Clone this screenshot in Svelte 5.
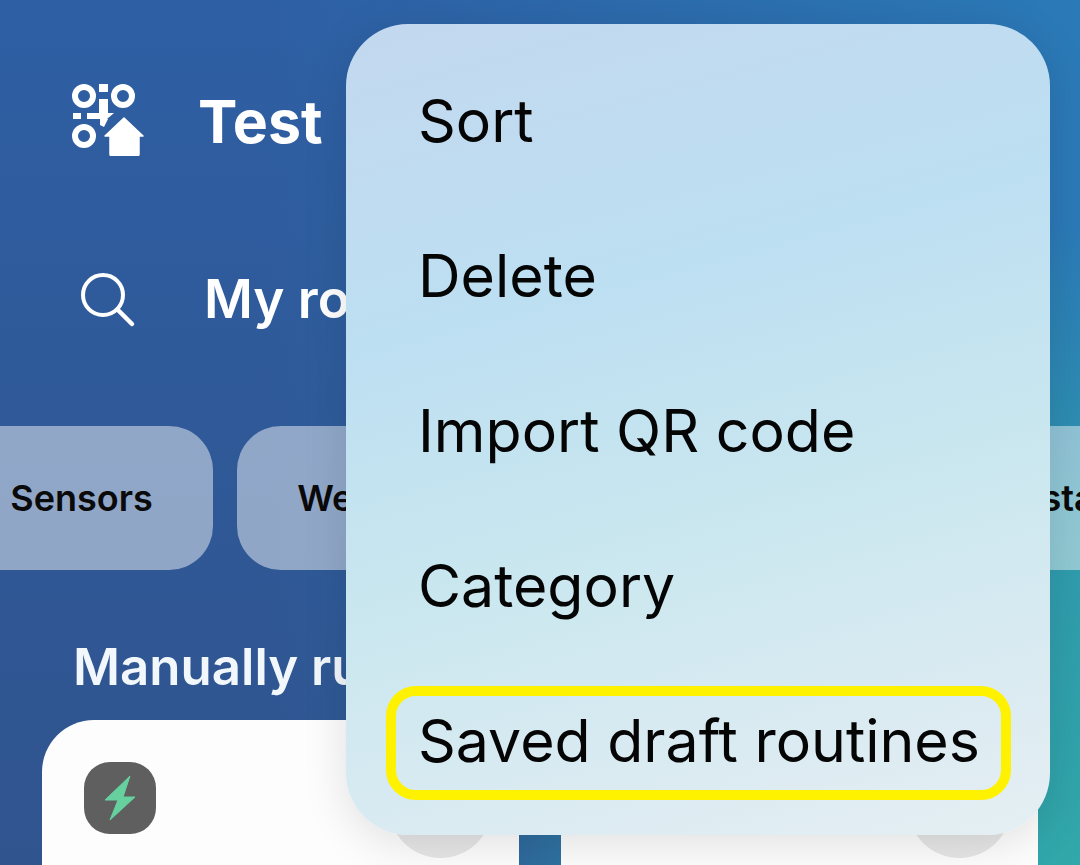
<script lang="ts">
  const chips = ["Sensors", "Weather", "Instant"];
  const menuItems = ["Sort", "Delete", "Import QR code", "Category", "Saved draft routines"];
  const cards = [0, 1];
</script>

<div class="page">
  <header class="topbar">
    <svg class="logo" viewBox="0 0 72 72" width="72" height="72" aria-hidden="true">
      <g fill="none" stroke="#fff" stroke-width="6">
        <circle cx="12" cy="12" r="9" />
        <circle cx="51" cy="12" r="9" />
        <circle cx="12" cy="52" r="9" />
      </g>
      <g fill="#fff">
        <rect x="27" y="0" width="9" height="8" />
        <rect x="27" y="15" width="9" height="14" />
        <rect x="1" y="29" width="8" height="6" />
        <rect x="15" y="29" width="13" height="6" />
        <path d="M28 29h7v6h-7zM35 29h7l-7 6zM28 35h8l-4 8-4-2z" />
        <path d="M52 34 71 52h-4v18a2 2 0 0 1-2 2H40a2 2 0 0 1-2-2V52h-5z" stroke="#fff" stroke-width="1.5" stroke-linejoin="round" />
      </g>
    </svg>
    <h1>Test</h1>
  </header>

  <div class="searchbar">
    <svg class="search" viewBox="0 0 60 60" width="60" height="60" aria-hidden="true">
      <circle cx="25" cy="26" r="20" fill="none" stroke="#fff" stroke-width="4" />
      <path d="M40 41 54 55" fill="none" stroke="#fff" stroke-width="4.5" stroke-linecap="round" />
    </svg>
    <h2>My routines</h2>
  </div>

  <div class="chips">
    {#each chips as chip}
      <div class="chip">{chip}</div>
    {/each}
  </div>

  <h3>Manually run</h3>

  <div class="cards">
    {#each cards as card}
      <div class="card">
        <div class="tile">
          {#if card === 0}
            <svg viewBox="0 0 72 72" width="72" height="72" aria-hidden="true">
              <path d="M46 14 21 38h13L26 58 51 35H39z" fill="#66d19e" stroke="#66d19e" stroke-width="1" stroke-linejoin="round" />
            </svg>
          {/if}
        </div>
        <div class="play"></div>
      </div>
    {/each}
  </div>

  <nav class="menu">
    {#each menuItems as item, i}
      <div class="item" class:marked={i === menuItems.length - 1}>{item}</div>
    {/each}
  </nav>
</div>

<style>
  :global(body) {
    margin: 0;
    background: #2f5a9a;
  }

  .page {
    position: relative;
    width: 1080px;
    height: 865px;
    overflow: hidden;
    display: flex;
    flex-direction: column;
    color: #fff;
    font-family: Inter, "Noto Sans", sans-serif;
    background:
      radial-gradient(ellipse 620px 640px at 100% 100%, #31a8aa 0%, rgba(49, 168, 170, 0.75) 45%, rgba(49, 168, 170, 0) 100%),
      linear-gradient(90deg, rgba(43, 122, 184, 0) 25%, #2b7ab8 100%),
      linear-gradient(180deg, #2e5fa4 0%, #2f5a9a 40%, #30548e 100%);
  }

  .topbar {
    flex: none;
    display: flex;
    align-items: center;
    height: 80px;
    margin-top: 80px;
    padding-left: 72px;
    gap: 54px;
  }

  .topbar h1 {
    margin: 0;
    padding-top: 3px;
    font-size: 59px;
    font-weight: 700;
    line-height: 77px;
  }

  .searchbar {
    flex: none;
    display: flex;
    align-items: center;
    height: 80px;
    margin-top: 99px;
    padding-left: 78px;
    gap: 66px;
  }

  .searchbar h2 {
    margin: 0;
    font-size: 53px;
    font-weight: 600;
    white-space: nowrap;
  }

  .chips {
    flex: none;
    display: flex;
    gap: 24px;
    height: 144px;
    margin-top: 87px;
    margin-left: -50px;
  }

  .chip {
    flex: none;
    display: flex;
    align-items: center;
    justify-content: center;
    width: 263px;
    border-radius: 44px;
    background: rgba(255, 255, 255, 0.47);
    color: #0a0a0a;
    font-size: 36px;
    font-weight: 600;
  }

  .chip:nth-child(2) {
    width: 268px;
  }

  .chip:nth-child(3) {
    margin-left: 409px;
  }

  h3 {
    flex: none;
    margin: 67px 0 0 73px;
    height: 60px;
    line-height: 60px;
    font-size: 51px;
    font-weight: 600;
    color: #f2f7fc;
    white-space: nowrap;
  }

  .cards {
    flex: none;
    display: flex;
    gap: 42px;
    margin: 23px 0 0 42px;
  }

  .card {
    position: relative;
    flex: none;
    width: 477px;
    height: 300px;
    box-sizing: border-box;
    padding: 42px;
    background: #fdfdfe;
    border-radius: 52px;
  }

  .tile {
    width: 72px;
    height: 72px;
    border-radius: 26px;
    background: #5f5f5f;
  }

  .card:last-child .tile {
    visibility: hidden;
  }

  .play {
    position: absolute;
    top: 35px;
    right: 27px;
    width: 103px;
    height: 103px;
    border-radius: 50%;
    background: #e6e6e7;
  }

  .menu {
    position: absolute;
    top: 24px;
    left: 346px;
    width: 704px;
    height: 811px;
    box-sizing: border-box;
    padding: 19px 0 18px;
    border-radius: 62px;
    color: #050505;
    font-size: 59px;
    font-weight: 370;
    background: linear-gradient(165deg, #c3d8ef 0%, #bddff2 33%, #cae7ef 60%, #dcebf2 85%, #e5eff3 100%);
    box-shadow: 0 8px 46px rgba(0, 0, 0, 0.12);
  }

  .item {
    position: relative;
    height: 155px;
    line-height: 155px;
    padding-left: 72px;
    white-space: nowrap;
  }

  .marked::after {
    content: "";
    position: absolute;
    top: 23px;
    left: 40px;
    width: 625px;
    height: 114px;
    box-sizing: border-box;
    border: 10px solid #fff200;
    border-radius: 30px;
  }
</style>
